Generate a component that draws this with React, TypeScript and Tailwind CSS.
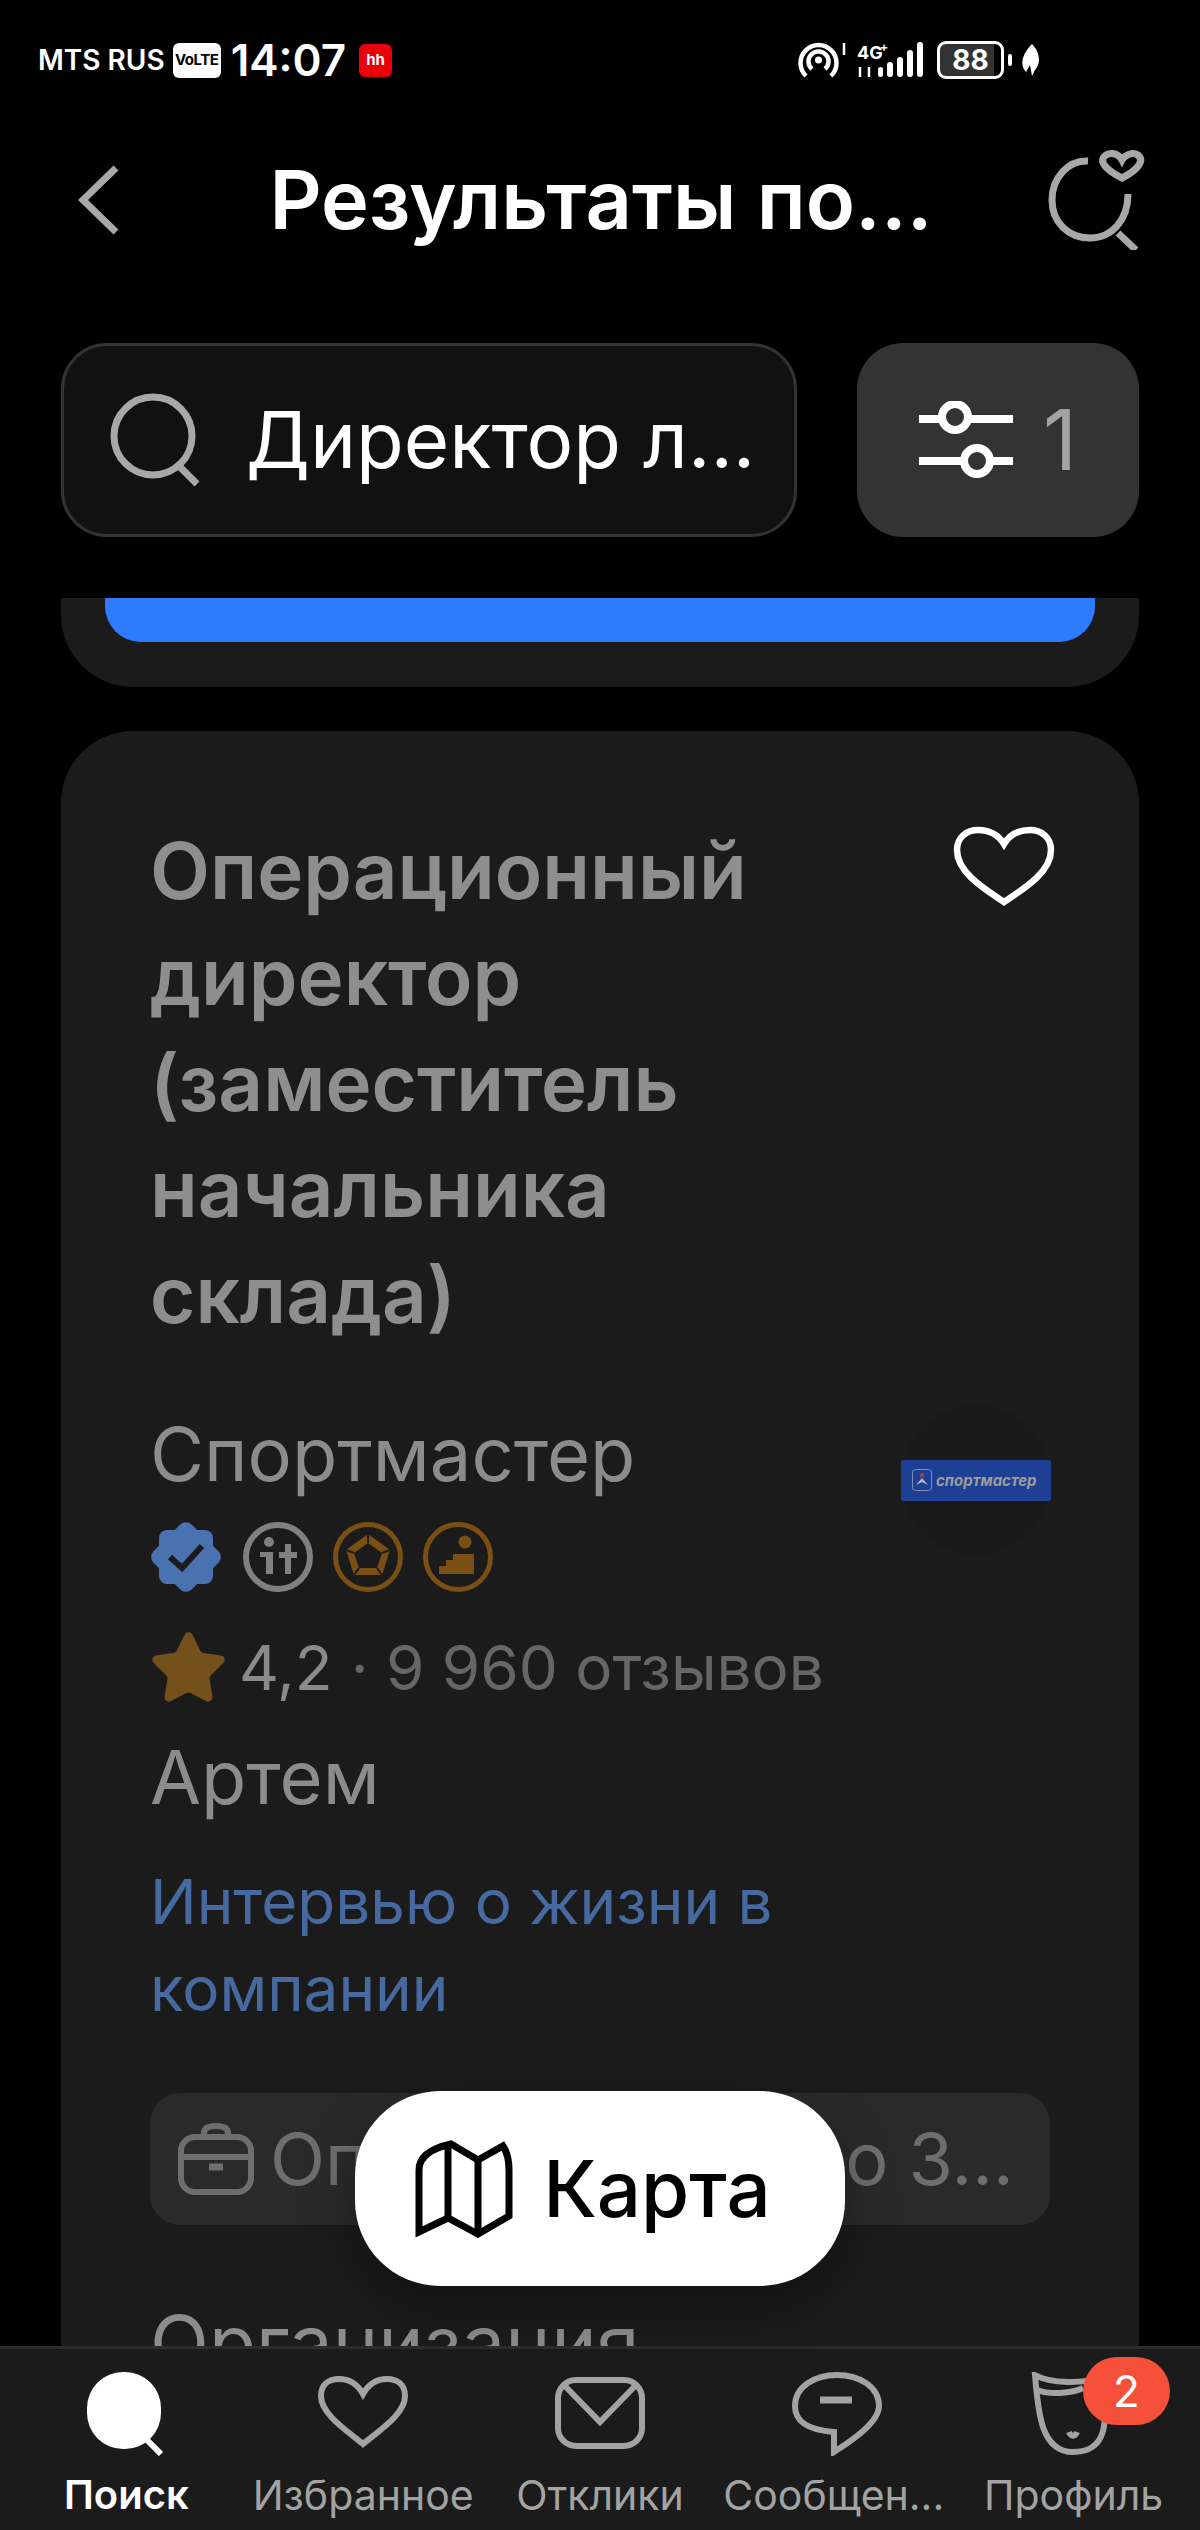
import { Star } from 'lucide-react'

function StatusBar() {
  return (
    <div className="flex h-[120px] shrink-0 items-center justify-between pl-[38px] pr-[160px] text-white">
      <div className="flex items-center">
        <span className="text-[28px] font-semibold leading-none">MTS RUS</span>
        <span className="ml-[8px] flex h-[35px] w-[48px] items-center justify-center rounded-[6px] bg-white text-[15px] font-bold tracking-[-0.5px] text-black">
          VoLTE
        </span>
        <span className="ml-[10px] text-[44px] font-semibold leading-none">14:07</span>
        <span className="ml-[13px] flex h-[33px] w-[33px] items-center justify-center rounded-[6px] bg-[#e8000b] text-[15px] font-bold">
          hh
        </span>
      </div>
      <div className="flex items-center">
        <svg width="126" height="40" viewBox="0 0 126 40" fill="none" stroke="#fff" strokeWidth="4.5">
          <path d="M8 36 A18 18 0 1 1 33 36" />
          <path d="M14 29 A10 10 0 1 1 27 29" />
          <circle cx="20.5" cy="20" r="3.5" fill="#fff" stroke="none" />
          <path d="M46 3 V15" strokeWidth="2.5" />
          <text x="59" y="19" fontSize="18" fontWeight="700" fontFamily="Inter" fill="#fff" stroke="none">4G</text>
          <text x="82" y="11" fontSize="12" fontWeight="700" fontFamily="Inter" fill="#fff" stroke="none">+</text>
          <path d="M62 27 V37 M71 27 V37" strokeWidth="2.5" />
          <g fill="#fff" stroke="none">
            <rect x="80" y="27" width="5" height="10" rx="2.5" />
            <rect x="89" y="22" width="6" height="15" rx="3" />
            <rect x="99" y="17" width="6" height="20" rx="3" />
            <rect x="109" y="10" width="6" height="27" rx="3" />
            <rect x="119" y="2" width="6" height="35" rx="3" />
          </g>
        </svg>
        <div className="ml-[13px] flex h-[38px] w-[67px] items-center justify-center rounded-[9px] border-[3px] border-white bg-linear-to-r from-[#333] from-[88%] to-black to-[88%] text-[28px] font-bold leading-none">
          88
        </div>
        <span className="ml-[4px] h-[12px] w-[4px] rounded-[2px] bg-white" />
        <svg className="ml-[9px]" width="19" height="32" viewBox="0 0 19 32" fill="#fff">
          <path d="M11 0 C18 7 21 18 14 26 L11 32 L9 21 L5 28 C-1 22 0 11 11 0 Z" />
        </svg>
      </div>
    </div>
  )
}

function TopBar() {
  return (
    <div className="flex h-[160px] shrink-0 items-center pl-[78px] pr-[52px]">
      <svg width="42" height="70" viewBox="0 0 42 70" fill="none" stroke="#a8a8a8" strokeWidth="7">
        <path d="M38 3 L5 35 L38 67" />
      </svg>
      <h1 className="flex-1 pl-[34px] text-center text-[81px] font-semibold leading-none text-white">Результаты по...</h1>
      <svg width="100" height="100" viewBox="0 0 100 100" fill="none" stroke="#a8a8a8" strokeWidth="7">
        <path d="M40 11 C20 10 4 28 4 50 C4 72 20 88 42 88 C64 88 80 70 80 44" />
        <path d="M70 83 L88 100" />
        <path d="M74 26 C62 20 48 10 58 3 C66 -1 72 4 74 8 C76 4 84 -1 90 3 C98 10 86 20 74 26 Z" transform="translate(0 2)" />
      </svg>
    </div>
  )
}

function SearchRow() {
  return (
    <div className="flex h-[194px] shrink-0 gap-[60px] px-[61px]">
      <div className="flex flex-1 items-center rounded-[46px] border-[3px] border-[#333] bg-[#111] pl-[45px]">
        <svg width="96" height="96" viewBox="0 0 96 96" fill="none" stroke="#a8a8a8" strokeWidth="7">
          <circle cx="44" cy="44" r="39" />
          <path d="M70 74 L88 92" />
        </svg>
        <span className="ml-[41px] text-[78px] leading-none text-white">Директор л...</span>
      </div>
      <div className="flex w-[282px] items-center justify-center gap-[30px] rounded-[46px] bg-[#333]">
        <svg width="94" height="78" viewBox="0 0 94 78" fill="none" stroke="#fff" strokeWidth="8">
          <path d="M0 18 H22 M50 18 H94" />
          <circle cx="36" cy="16" r="13" />
          <path d="M0 60 H44 M72 60 H94" />
          <circle cx="58" cy="60" r="13" />
        </svg>
        <span className="text-[84px] leading-none text-[#a3a3a3]">1</span>
      </div>
    </div>
  )
}

function Badges() {
  return (
    <div className="mt-[16px] flex h-[74px] items-center gap-[18px]">
      <svg className="-ml-[2px]" width="76" height="76" viewBox="0 0 76 76">
        <g fill="#4a72b0">
          <rect x="11" y="11" width="54" height="54" rx="8" />
          <rect x="11" y="11" width="54" height="54" rx="8" transform="rotate(45 38 38)" />
        </g>
        <path d="M22 38 L34 49 L54 27" fill="none" stroke="#1b1b1b" strokeWidth="6" />
      </svg>
      <svg width="72" height="72" viewBox="0 0 72 72" fill="none">
        <circle cx="36" cy="36" r="32" stroke="#808080" strokeWidth="6" />
        <circle cx="27" cy="21" r="5" fill="#808080" />
        <path d="M18 31 H31 V53 H24 V36 H18 Z M37 31 H43 V23 H49 V31 H55 V37 H49 V53 H43 V37 H37 Z" fill="#808080" />
      </svg>
      <svg width="72" height="72" viewBox="0 0 72 72" fill="none">
        <circle cx="36" cy="36" r="32.5" stroke="#7a4f14" strokeWidth="5" />
        <path d="M36 13 L58 29 L50 54 H22 L14 29 Z" fill="#7a4f14" />
        <path d="M36 22 L50 32 L45 47 H27 L22 32 Z" fill="#1b1b1b" />
        <path d="M36 13 V22 M58 29 L50 32 M50 54 L45 47 M22 54 L27 47 M14 29 L22 32" stroke="#1b1b1b" strokeWidth="2" />
      </svg>
      <svg width="72" height="72" viewBox="0 0 72 72" fill="none">
        <circle cx="36" cy="36" r="32.5" stroke="#7a4f14" strokeWidth="5" />
        <circle cx="43" cy="21" r="6.5" fill="#7a4f14" />
        <path d="M17 53 V45 H24 V39 H31 V33 H52 V53 Z" fill="#7a4f14" />
      </svg>
    </div>
  )
}

function CompanyLogo() {
  return (
    <div className="flex h-[150px] w-[150px] items-center rounded-full bg-[#191919]">
      <div className="flex h-[41px] w-full items-center gap-[4px] rounded-[3px] bg-[#1f3f94] pl-[11px]">
        <svg width="20" height="22" viewBox="0 0 20 22" fill="none" className="shrink-0">
          <rect x="0.5" y="0.5" width="19" height="21" rx="3" stroke="#7f90bf" />
          <circle cx="10" cy="6" r="2" fill="#b03a4a" />
          <path d="M4 16 L10 9 L16 16 L10 13 Z" fill="#b9b9b9" />
        </svg>
        <span className="text-[15px] font-bold italic leading-none text-[#9c9c9c]">спортмастер</span>
      </div>
    </div>
  )
}

function VacancyCard() {
  return (
    <div className="relative mt-[44px] rounded-t-[72px] bg-[#1b1b1b] px-[89px] pb-[100px] pt-[87px]">
      <svg className="absolute right-[84px] top-[95px]" width="102" height="80" viewBox="0 0 102 80" fill="none" stroke="#fff" strokeWidth="6.5">
        <path d="M51 76 C30 62 4 46 4 24 C4 11 14 4 25 4 C37 4 46 10 51 18 C56 10 65 4 77 4 C88 4 98 11 98 24 C98 46 72 62 51 76 Z" />
      </svg>
      <h2 className="w-[700px] text-[78px] font-semibold leading-[106px] text-[#8e8e8e]">
        Операционный директор (заместитель начальника склада)
      </h2>
      <div className="mt-[56px] flex items-start justify-between">
        <div>
          <div className="text-[74px] leading-[100px] text-[#8c8c8c]">Спортмастер</div>
          <Badges />
        </div>
        <div className="-mr-[1px] mt-[1px]">
          <CompanyLogo />
        </div>
      </div>
      <div className="-ml-[2px] mt-[39px] flex h-[70px] items-center gap-[10px] text-[62px] leading-none">
        <Star size={81} fill="#74501a" stroke="#74501a" strokeWidth={1.5} />
        <span className="text-[#8a8a8a]">4,2</span>
        <span className="ml-[8px] text-[#666]">· 9 960 отзывов</span>
      </div>
      <div className="mt-[24px] text-[74px] leading-[100px] text-[#8c8c8c]">Артем</div>
      <a className="mt-[31px] block w-[700px] text-[62px] leading-[87px] text-[#466a9f]">Интервью о жизни в компании</a>
      <div className="mt-[61px] flex h-[132px] items-center rounded-[30px] bg-[#2a2a2a] px-[28px] text-[72px] leading-none text-[#6e6e6e]">
        <svg width="76" height="72" viewBox="0 0 76 72" fill="none" stroke="#6e6e6e" strokeWidth="6">
          <path d="M26 14 V10 C26 5 30 3 38 3 C46 3 50 5 50 10 V14" />
          <rect x="3" y="14" width="70" height="55" rx="14" />
          <path d="M3 34 H73" />
          <path d="M31 44 H45" strokeWidth="7" />
        </svg>
        <span className="ml-[16px]">Опыт от 1 года до 3...</span>
      </div>
      <div className="mt-[80px] text-[77px] leading-none text-[#8c8c8c]">Организация</div>
    </div>
  )
}

function NavIcon({ name }: { name: string }) {
  if (name === 'search') {
    return (
      <svg width="90" height="84" viewBox="0 0 90 84">
        <rect x="6" y="0" width="74" height="77" rx="36" fill="#fff" />
        <path d="M66 68 L80 82" stroke="#fff" strokeWidth="6" fill="none" />
      </svg>
    )
  }
  if (name === 'heart') {
    return (
      <svg width="90" height="84" viewBox="0 0 90 84" fill="none" stroke="#a3a3a3" strokeWidth="6">
        <path d="M45 72 C28 58 3 42 3 24 C3 12 11 7 21 7 C32 7 40 13 45 22 C50 13 58 7 69 7 C79 7 87 12 87 24 C87 42 62 58 45 72 Z" />
      </svg>
    )
  }
  if (name === 'mail') {
    return (
      <svg width="90" height="84" viewBox="0 0 90 84" fill="none" stroke="#a3a3a3" strokeWidth="6">
        <rect x="3" y="8" width="84" height="66" rx="18" />
        <path d="M8 12 L45 50 L82 12" />
      </svg>
    )
  }
  if (name === 'chat') {
    return (
      <svg width="90" height="84" viewBox="0 0 90 84" fill="none" stroke="#a3a3a3" strokeWidth="6">
        <path d="M45 3 C22 3 3 15 3 34 C3 50 16 58 42 60 L42 80 C54 72 87 52 87 34 C87 15 68 3 45 3 Z" />
        <path d="M28 28 H60" strokeWidth="7" />
      </svg>
    )
  }
  return (
    <svg width="90" height="84" viewBox="0 0 90 84" fill="none" stroke="#a3a3a3" strokeWidth="6">
      <path d="M6 3 C22 12 54 12 74 5 C76 40 84 80 44 80 C12 80 9 40 6 3 Z" />
      <path d="M8 18 C24 24 46 20 54 16" />
      <path d="M40 60 C42 65 46 65 48 60" />
    </svg>
  )
}

const navItems = [
  { icon: 'search', label: 'Поиск', active: true },
  { icon: 'heart', label: 'Избранное', active: false },
  { icon: 'mail', label: 'Отклики', active: false },
  { icon: 'chat', label: 'Сообщен...', active: false },
  { icon: 'profile', label: 'Профиль', active: false },
]

function BottomNav() {
  return (
    <nav className="relative grid h-[184px] shrink-0 grid-cols-5 border-t-[3px] border-[#2c2c2c] bg-[#1b1b1b] px-[8px]">
      {navItems.map((item) => (
        <div key={item.label} className="flex flex-col items-center pt-[23px]">
          <NavIcon name={item.icon} />
          <span className={`mt-[16px] whitespace-nowrap leading-[46px] ${item.active ? 'text-[40px] font-semibold text-white' : 'text-[41px] text-[#a3a3a3]'} ${item.icon === 'chat' ? 'mr-[6px]' : ''}`}>
            {item.label}
          </span>
        </div>
      ))}
      <span className="absolute left-[1083px] top-[8px] flex h-[68px] w-[87px] items-center justify-center rounded-full bg-[#f4503a] text-[44px] leading-none text-white">
        2
      </span>
    </nav>
  )
}

export default function App() {
  return (
    <div className="relative flex h-[2530px] w-[1200px] flex-col overflow-hidden bg-black font-[Inter,sans-serif]">
      <StatusBar />
      <TopBar />
      <div className="pt-[63px]">
        <SearchRow />
      </div>
      <div className="mt-[61px] min-h-0 flex-1 overflow-hidden px-[61px]">
        <div className="h-[89px] rounded-b-[72px] bg-[#1b1b1b] px-[44px]">
          <div className="h-[44px] rounded-b-[36px] bg-[#2d7bff]" />
        </div>
        <VacancyCard />
      </div>
      <BottomNav />
      <button className="absolute left-[355px] top-[2091px] flex h-[195px] w-[490px] items-center justify-center gap-[30px] rounded-[85px] bg-white pr-[14px] shadow-[0_20px_50px_rgba(0,0,0,0.35)]">
        <svg width="98" height="98" viewBox="0 0 98 98" fill="none" stroke="#000" strokeWidth="7">
          <path d="M4 30 C4 16 18 8 36 4 L63 20 L88 6 C92 12 94 20 94 30 V76 L63 94 L33 78 L4 92 Z" />
          <path d="M33 4 V78 M63 20 V94" />
        </svg>
        <span className="text-[78px] font-medium leading-none text-black">Карта</span>
      </button>
    </div>
  )
}
